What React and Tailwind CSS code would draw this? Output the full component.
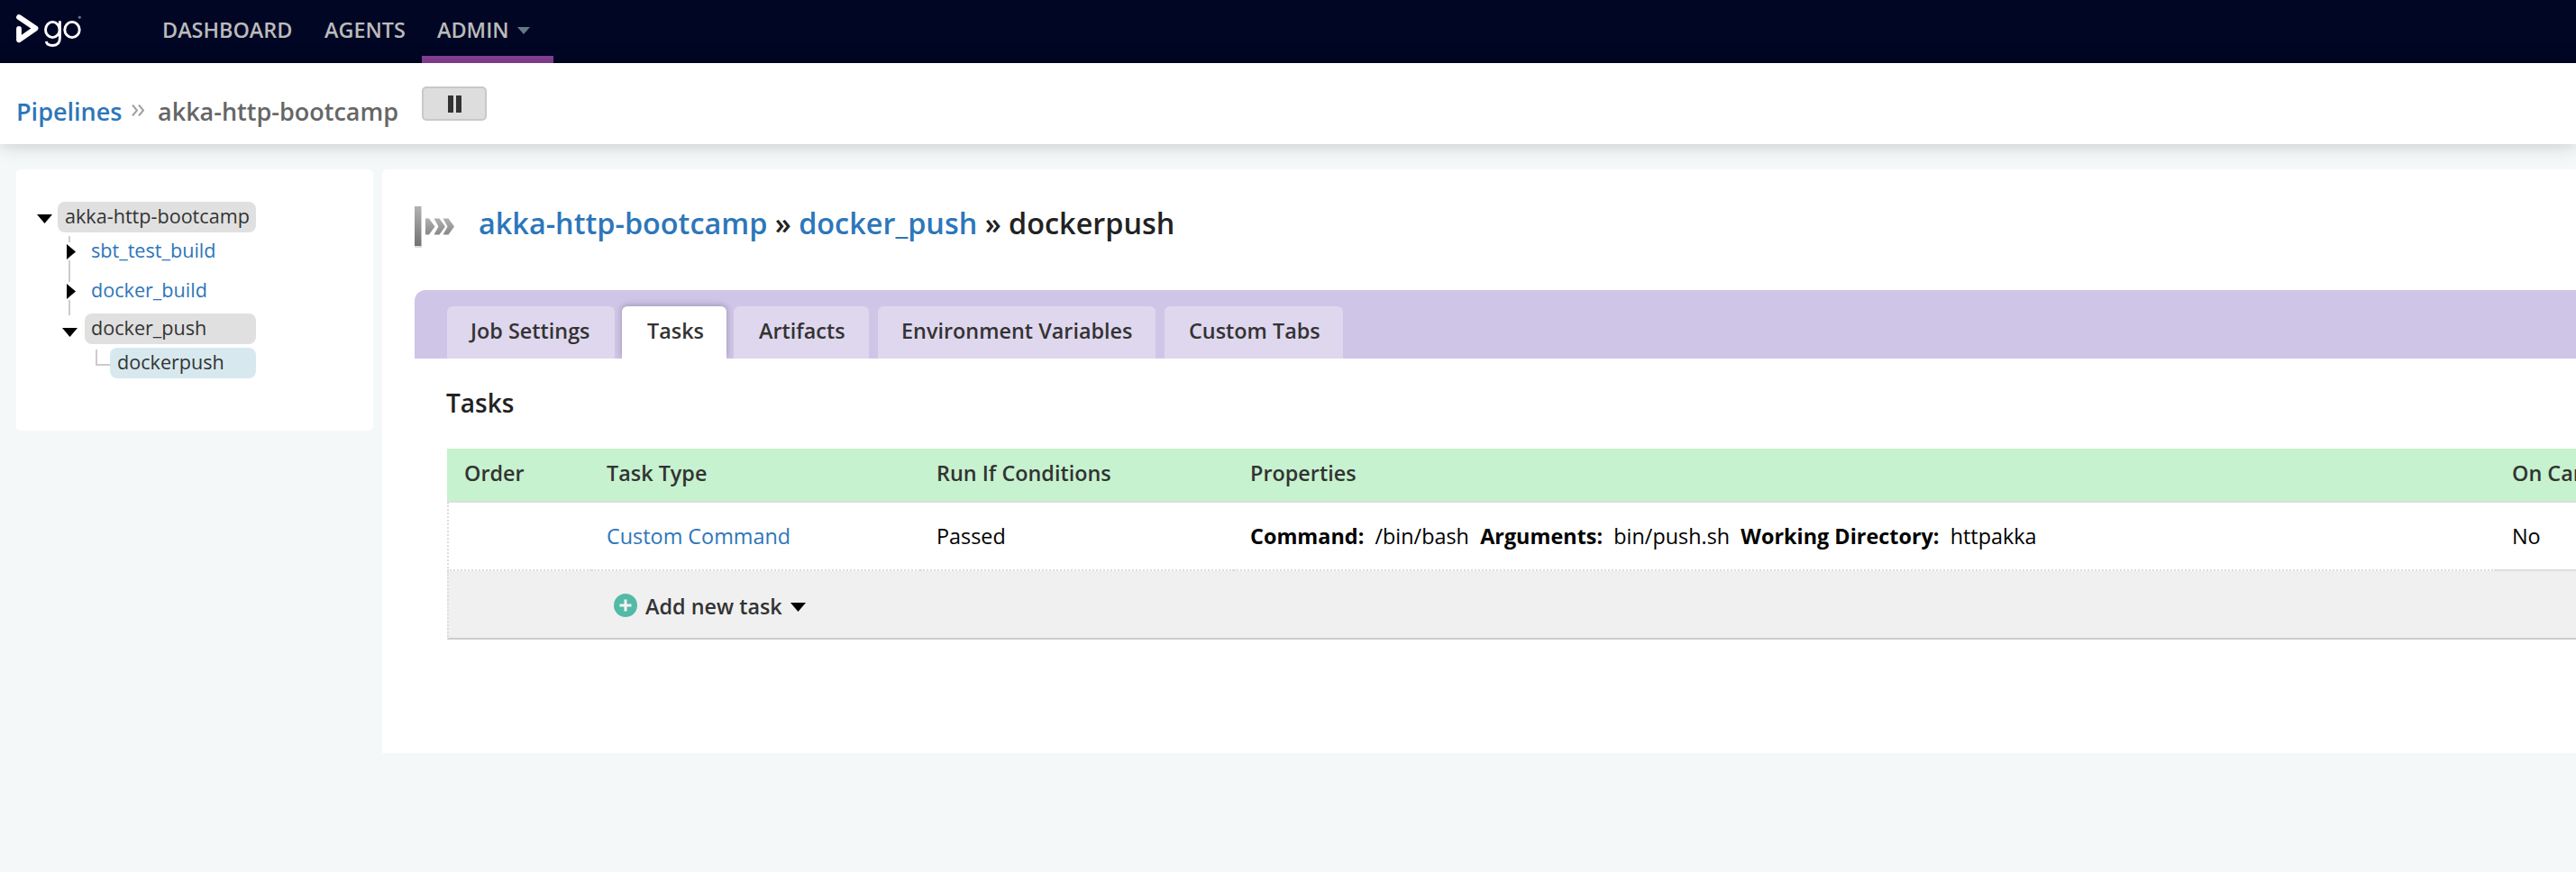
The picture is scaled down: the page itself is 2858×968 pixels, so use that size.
const link = "text-[#2d76ba]";

function Logo() {
  return (
    <svg width="76" height="42" viewBox="0 0 76 42" fill="none" className="block">
      <path d="M4 4L22.500 16.500L4 29.300V17" stroke="#fff" strokeWidth="5.800" strokeLinecap="round" strokeLinejoin="round" />
      <path d="M1 9.500L8 14.200" stroke="#000624" strokeWidth="1.500" />
      <ellipse cx="41.300" cy="18" rx="7.800" ry="8.600" stroke="#fff" strokeWidth="2.900" />
      <path d="M49.400 8.300V27C49.400 32.500 46.500 35.500 41.500 35.500C37.500 35.500 34.800 34 34.300 31" stroke="#fff" strokeWidth="2.900" />
      <ellipse cx="63" cy="18" rx="8.200" ry="8.600" stroke="#fff" strokeWidth="2.900" />
      <circle cx="71.300" cy="4.200" r="1.300" fill="#777b8c" stroke="#777b8c" strokeWidth="0.500" />
    </svg>
  );
}

function Down({ className }) {
  return (
    <svg width="17" height="10" viewBox="0 0 17 10" className={className}>
      <path d="M0 0H17L8.500 10Z" fill="currentColor" />
    </svg>
  );
}

function Right() {
  return (
    <svg width="10" height="17" viewBox="0 0 10 17" className="block">
      <path d="M0 0V17L10 8.500Z" fill="#000" />
    </svg>
  );
}

function JobIcon() {
  return (
    <svg width="46" height="48" viewBox="0 0 46 48" className="block">
      <defs>
        <linearGradient id="bar" x1="0" y1="0" x2="0" y2="1">
          <stop offset="0" stopColor="#b2b2b2" />
          <stop offset="1" stopColor="#727272" />
        </linearGradient>
        <linearGradient id="chevron" x1="0" y1="0" x2="0" y2="1">
          <stop offset="0" stopColor="#b0b0b0" />
          <stop offset="1" stopColor="#888" />
        </linearGradient>
      </defs>
      <rect x="0" y="45" width="8" height="2" fill="#ddd" />
      <rect x="0" y="1" width="7.500" height="44" fill="url(#bar)" />
      <path d="M12 14.500h4l6.500 9-6.500 9h-4z" fill="url(#chevron)" />
      <path d="M21.500 14.500h6l6.500 9-6.500 9h-6l5-9z" fill="url(#chevron)" />
      <path d="M31.500 14.500h6l6.500 9-6.500 9h-6l5-9z" fill="url(#chevron)" />
    </svg>
  );
}

const tabs = [
  { label: "Job Settings", box: "mr-[8px] w-[186px] pl-[26px]" },
  { label: "Tasks", box: "mr-[8px] w-[116px] pl-[28px]", active: true },
  { label: "Artifacts", box: "mr-[10px] w-[150px] pl-[28px]" },
  { label: "Environment Variables", box: "mr-[10px] w-[308px] pl-[26px]" },
  { label: "Custom Tabs", box: "w-[198px] pl-[27px]" },
];

const dotted = "shrink-0 border-b-2 border-dotted border-[#ddd] ";

export default function App() {
  return (
    <div className="h-[968px] w-[2858px] overflow-hidden bg-[#f4f8f9] font-['Open_Sans',sans-serif] text-[23.4px] text-[#333]">
      <header className="flex h-[70px] bg-[#000624] leading-[66px] font-semibold text-[#bbb]">
        <div className="w-[180px] pt-[15px] pl-[17px]"><Logo /></div>
        <a className="w-[180px]">DASHBOARD</a>
        <a className="w-[108px]">AGENTS</a>
        <a className="flex w-[146px] items-start border-b-8 border-[#8a4199] pl-[17px]">
          ADMIN
          <svg width="14" height="8" viewBox="0 0 14 8" className="mt-[30px] ml-[9px]"><path d="M0 0H14L7 8Z" fill="#647984" /></svg>
        </a>
      </header>

      <div className="relative flex h-[90px] bg-white text-[27px] leading-[37px] font-semibold text-[#666] shadow-[0_0_20px_rgba(0,0,0,0.22)]">
        <a className={"mt-[35px] ml-[18px] w-[128px] " + link}>Pipelines</a>
        <svg width="15" height="13" viewBox="0 0 15 13" className="mt-[46px] mr-[14px]" fill="none" stroke="#a0a0a0" strokeWidth="2">
          <path d="M1 0.500L6 6.500L1 12.500M8 0.500L13 6.500L8 12.500" />
        </svg>
        <span className="mt-[35px] w-[293px]">akka-http-bootcamp</span>
        <button className="mt-[26px] flex h-[38px] w-[72px] items-center justify-center gap-[3px] rounded-[5px] border-2 border-[#c8c8c8] bg-[#ddd] pl-[1px]">
          <span className="h-[19px] w-[6px] bg-[#333]" />
          <span className="h-[19px] w-[6px] bg-[#333]" />
        </button>
      </div>

      <div className="flex items-start gap-[10px] pt-[28px] pl-[18px]">
        <aside className="h-[290px] w-[396px] shrink-0 rounded-[5px] bg-white pt-[36px] pl-[23px] text-[21.6px] leading-[31px]">
          <div className="flex items-start">
            <Down className="mt-[14px] mr-[6px] text-black" />
            <div className="h-[34px] w-[220px] rounded-[8px] bg-[#e0e0e0] pl-[8px]">akka-http-bootcamp</div>
          </div>
          <div className="ml-[33px] pt-[4px]">
            <div className="flex h-[44px]">
              <div className="flex w-[27px] flex-col">
                <span className="ml-[2px] h-[7px] w-[2px] bg-[#ccc]" />
                <div className="mt-[2px] mb-[1px]"><Right /></div>
                <span className="ml-[2px] w-[2px] grow bg-[#ccc]" />
              </div>
              <a className={link}>sbt_test_build</a>
            </div>
            <div className="flex h-[44px]">
              <div className="flex w-[27px] flex-col">
                <span className="ml-[2px] h-[7px] w-[2px] bg-[#ccc]" />
                <div className="mt-[2px] mb-[1px]"><Right /></div>
                <span className="ml-[2px] w-[2px] grow bg-[#ccc]" />
              </div>
              <a className={link}>docker_build</a>
            </div>
          </div>
          <div className="-mt-[2px] flex items-start pl-[28px]">
            <Down className="mt-[16px] mr-[8px] text-black" />
            <div className="h-[34px] w-[190px] rounded-[8px] bg-[#e0e0e0] pl-[7px]">docker_push</div>
          </div>
          <div className="flex items-start pt-[4px] pl-[65px]">
            <span className="mt-[2px] h-[18px] w-[16px] border-b-2 border-l-2 border-[#ccc]" />
            <div className="h-[34px] w-[162px] rounded-[8px] bg-[#d7e9ef] pl-[8px]">dockerpush</div>
          </div>
        </aside>

        <main className="h-[648px] grow rounded-tl-[5px] bg-white pl-[36px]">
          <div className="flex h-[134px] pt-[37px] text-[32.4px] leading-[44px] font-semibold text-[#222]">
            <div className="w-[71px] pt-[3px]"><JobIcon /></div>
            <h1 className="whitespace-pre"><a className={link}>akka-http-bootcamp</a> » <a className={link}>docker_push</a> » dockerpush</h1>
          </div>
          <nav className="flex h-[76px] overflow-hidden rounded-tl-[12px] bg-[#cfc5e7] pt-[18px] pl-[36px] font-semibold">
            {tabs.map((t) => (
              <a key={t.label} className={"h-[58px] shrink-0 rounded-t-[6px] leading-[54px] whitespace-nowrap " + t.box + (t.active ? " bg-white shadow-[0_-1px_7px_rgba(0,0,0,0.26)]" : " relative bg-[#dfd7ee]")}>{t.label}</a>
            ))}
          </nav>
          <h2 className="h-[100px] pt-[30px] pl-[35px] text-[28px] leading-[38px] font-semibold text-[#222]">Tasks</h2>
          <section className="ml-[36px] w-[2362px] overflow-hidden">
            <div className="flex h-[60px] border-b-2 border-[#ddd] bg-[#c6f2cf] leading-[54px] font-semibold whitespace-nowrap">
              <span className="w-[177px] shrink-0 pl-[19px]">Order</span>
              <span className="w-[366px] shrink-0">Task Type</span>
              <span className="w-[348px] shrink-0">Run If Conditions</span>
              <span className="w-[1400px] shrink-0">Properties</span>
              <span className="shrink-0">On Cancel</span>
            </div>
            <div className="flex h-[76px] leading-[74px] text-black">
              <div className={dotted + "w-[160px] border-l-2"} />
              <a className={dotted + "w-[365px] pl-[17px] " + link}>Custom Command</a>
              <span className={dotted + "w-[348px] pl-[18px]"}>Passed</span>
              <span className={dotted + "w-[1400px] pl-[18px] whitespace-pre"}><b>Command:</b>  /bin/bash  <b>Arguments:</b>  bin/push.sh  <b>Working Directory:</b>  httpakka</span>
              <span className="grow border-b-2 border-[#ddd] pl-[18px]">No</span>
            </div>
            <div className="flex h-[76px] items-start border-b-2 border-l-2 border-b-[#ccc] border-l-[#ddd] bg-[#f0f0f0] pl-[183px] leading-[78px] font-semibold [border-left-style:dotted]">
              <svg width="26" height="26" viewBox="0 0 26 26" className="mt-[25px]"><circle cx="13" cy="13" r="13" fill="#54baa5" /><path d="M13 6.500V19.500M6.500 13H19.500" stroke="#f5f5f5" strokeWidth="3" /></svg>
              <span className="ml-[9px]">Add new task</span>
              <Down className="mt-[35px] ml-[9px] text-black" />
            </div>
          </section>
        </main>
      </div>
    </div>
  );
}
